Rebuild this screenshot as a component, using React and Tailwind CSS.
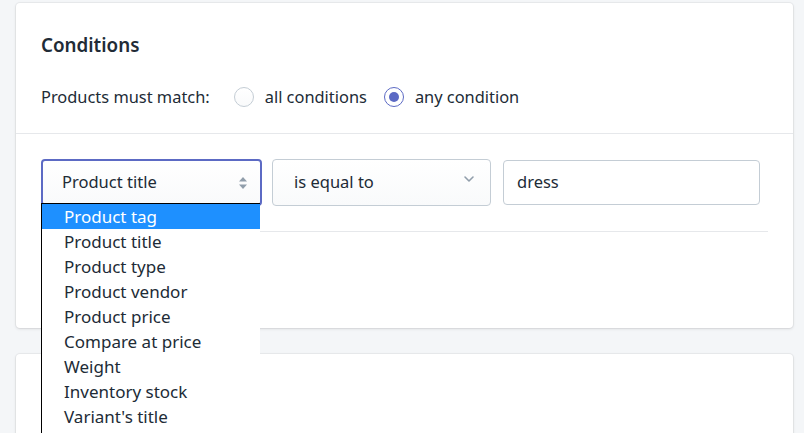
import React from "react";

const items = [
  "Product tag",
  "Product title",
  "Product type",
  "Product vendor",
  "Product price",
  "Compare at price",
  "Weight",
  "Inventory stock",
  "Variant's title",
];

export default function App() {
  return (
    <div
      className="w-[804px] h-[433px] overflow-hidden bg-[#f4f6f8] pl-[16px] pr-[11px] pt-[3px] text-[#212b36] relative"
      style={{ fontFamily: '"Segoe UI", "Noto Sans", "Open Sans", sans-serif' }}
    >
      <div className="bg-white rounded-[4px] shadow-[0_0_0_1px_rgba(63,63,68,0.05),0_1px_3px_0_rgba(63,63,68,0.15)] relative">
        <div className="px-[25px] pt-[30px] pb-[24px] border-b border-[#e6e8eb]">
          <h2 className="text-[18.8px] leading-[24px] font-semibold">Conditions</h2>
          <div className="flex items-center mt-[28px] text-[16.4px] leading-[24px]">
            <span>Products must match:</span>
            <span className="ml-[24px] w-[20px] h-[20px] rounded-full border border-[#c4cdd5] bg-gradient-to-b from-white to-[#f9fafb]" />
            <span className="ml-[11px]">all conditions</span>
            <span className="ml-[17px] w-[20px] h-[20px] rounded-full border-[1.5px] border-[#5c6ac4] flex items-center justify-center">
              <span className="w-[10px] h-[10px] rounded-full bg-[#5c6ac4]" />
            </span>
            <span className="ml-[11px]">any condition</span>
          </div>
        </div>
        <div className="px-[25px] pt-[25px] pb-[30px]">
          <div className="flex items-center border-b border-[#e6e8eb] pb-[25px]">
            <div className="relative w-[221px] h-[47px] rounded-[4px] border-2 border-[#5c6ac4] bg-gradient-to-b from-white to-[#f9fafb] flex items-center pl-[19px] pr-[12px] text-[16.5px]">
              <span className="flex-1">Product title</span>
              <svg width="10" height="14" viewBox="0 0 10 14" className="text-[#919eab]">
                <path d="M5 1 L9 5.5 H1 Z" fill="currentColor" />
                <path d="M5 13 L9 8.5 H1 Z" fill="currentColor" />
              </svg>
            </div>
            <div className="ml-[10px] w-[219px] h-[47px] rounded-[4px] border border-[#c4cdd5] bg-gradient-to-b from-white to-[#f9fafb] flex items-center pl-[21px] pr-[15px] text-[16.5px]">
              <span className="flex-1">is equal to</span>
              <svg width="12" height="8" viewBox="0 0 12 8" className="text-[#919eab] -mt-[8px]">
                <path d="M2 2 L6 6 L10 2" fill="none" stroke="currentColor" strokeWidth="1.6" strokeLinecap="round" strokeLinejoin="round" />
              </svg>
            </div>
            <div className="ml-[12px] w-[257px] h-[45px] rounded-[4px] border border-[#c4cdd5] bg-white flex items-center pl-[13px] text-[16.5px]">
              dress
            </div>
          </div>
          <div className="mt-[19px] h-[47px] w-[180px] rounded-[4px] border border-[#c4cdd5] bg-gradient-to-b from-white to-[#f9fafb]" />
        </div>
        <div className="absolute left-[25px] top-[200px] w-[219px] pb-[20px] bg-white border-l border-t border-black z-10 text-[17px] leading-[25px]">
          {items.map((it, i) => (
            <div
              key={it}
              className={
                "pl-[22px] h-[25px] whitespace-nowrap " +
                (i === 0 ? "bg-[#1e90ff] text-white" : "text-[#212b36]")
              }
            >
              {it}
            </div>
          ))}
        </div>
      </div>
      <div className="mt-[26px] bg-white rounded-[4px] h-[200px] shadow-[0_0_0_1px_rgba(63,63,68,0.05),0_1px_3px_0_rgba(63,63,68,0.15)]" />
    </div>
  );
}
